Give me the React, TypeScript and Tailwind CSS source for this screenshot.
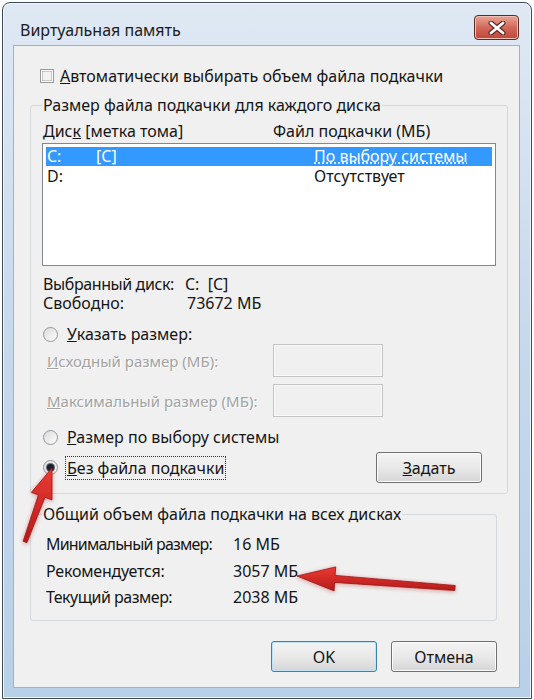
import React from "react";

const Radio = ({ checked }: { checked?: boolean }) => (
  <span className="flex h-[15px] w-[15px] shrink-0 items-center justify-center rounded-full border border-[#8e979f] bg-gradient-to-br from-[#dcdcdc] to-[#fdfdfd]">
    {checked && <span className="h-[7px] w-[7px] rounded-full bg-[#18222c] ring-1 ring-[#5c6670]" />}
  </span>
);

const Btn = ({ children, primary }: { children: React.ReactNode; primary?: boolean }) => (
  <button
    className={
      "flex h-[31px] w-[106px] items-center justify-center rounded-[3px] border bg-gradient-to-b from-[#f4f4f4] via-[#e9e9e9] to-[#d6d6d6] text-[16px] text-[#151515] " +
      (primary ? "border-[#3c7fb1] shadow-[inset_0_0_0_1px_#bfe3f6]" : "border-[#707070] shadow-[inset_0_0_0_1px_#fcfcfc]")
    }
  >
    {children}
  </button>
);

const Arrows = () => (
  <svg className="pointer-events-none absolute left-0 top-0" width="534" height="700" viewBox="0 0 534 700">
    <defs>
      <linearGradient id="red" x1="0" y1="0" x2="0" y2="1">
        <stop offset="0" stopColor="#ec3a35" />
        <stop offset="1" stopColor="#b51a1a" />
      </linearGradient>
      <filter id="sh" x="-20%" y="-20%" width="140%" height="140%">
        <feDropShadow dx="0" dy="1" stdDeviation="2" floodColor="#b02020" floodOpacity="0.45" />
      </filter>
    </defs>
    <polygon
      filter="url(#sh)"
      fill="url(#red)"
      stroke="#9c1414"
      strokeWidth="0.8"
      points="52,468 52,500 45,497.3 26.9,542.7 23.1,541.3 38.4,494.9 31.4,492.3"
    />
    <polygon
      filter="url(#sh)"
      fill="url(#red)"
      stroke="#9c1414"
      strokeWidth="0.8"
      points="297,576 335.7,566.9 335.1,575.4 455.2,585.5 454.8,590.5 334.7,582.4 334.1,590.9"
    />
  </svg>
);

export default function App() {
  return (
    <div className="relative h-[700px] w-[534px] bg-white font-['Noto_Sans',sans-serif] text-[16px] leading-[22px] text-[#151515]">
      <div className="ml-[2px] pt-[2px]">
        <div className="flex h-[697px] w-[530px] flex-col rounded-t-[8px] border border-[#3f4c58] bg-gradient-to-b from-[#dfe9f4] via-[#c6d8ec] to-[#b8d0e8] shadow-[inset_0_0_0_1px_#eef4fa]">
          {/* Title bar */}
          <div className="flex h-[42px] shrink-0 items-start">
            <span className="ml-[17px] mt-[16px] text-[16px] leading-[22px] text-[#1b1b1b]">Виртуальная память</span>
            <div className="ml-auto mr-[12px] mt-[12px] flex h-[25px] w-[45px] items-center justify-center rounded-[4px] border border-[#5e2a24] bg-gradient-to-b from-[#e7a597] via-[#d2685a] to-[#c0453a] shadow-[inset_0_0_0_1px_#f0c0b4]">
              <svg width="18" height="14" viewBox="0 0 18 14">
                <path d="M3 2 L15 12 M15 2 L3 12" stroke="#5a2a24" strokeWidth="5" strokeLinecap="round" />
                <path d="M3 2 L15 12 M15 2 L3 12" stroke="#ffffff" strokeWidth="2.8" strokeLinecap="round" />
              </svg>
            </div>
          </div>

          {/* Client area */}
          <div className="mb-[10px] ml-[10px] mr-[11px] flex flex-1 flex-col border border-[#9fb2c6] bg-[#f0f0f0]">
            <div className="ml-[26px] mt-[20px] flex h-[20px] items-center gap-[6px]">
              <span className="flex h-[14px] w-[14px] items-center justify-center border border-[#9a9a9a] bg-white">
                <span className="h-[10px] w-[10px] border border-[#c8c8c8] bg-[#f2f2f2]" />
              </span>
              <span>
                <u>А</u>втоматически выбирать объем файла подкачки
              </span>
            </div>

            <fieldset className="ml-[16px] mt-[8px] w-[478px] rounded-[3px] border border-[#d3d9de] px-[11px] pb-[10px]">
              <legend className="px-[1px]">Размер файла подкачки для каждого диска</legend>
              <div className="mt-[4px] grid h-[22px] grid-cols-[230px_1fr] items-center pl-[1px]">
                <span>
                  Дис<u>к</u> [метка тома]
                </span>
                <span>Файл подкачки (МБ)</span>
              </div>
              <div className="mt-[1px] h-[123px] w-[454px] border border-[#828790] bg-white p-[3px] leading-[19px]">
                <div className="grid h-[19px] grid-cols-[49px_218px_1fr] items-center bg-[#3399ff] pl-[1px] text-white">
                  <span>C:</span>
                  <span>[C]</span>
                  <span className="underline decoration-dotted">По выбору системы</span>
                </div>
                <div className="grid h-[21px] grid-cols-[49px_218px_1fr] items-center pl-[1px]">
                  <span>D:</span>
                  <span />
                  <span>Отсутствует</span>
                </div>
              </div>

              <div className="mt-[8px] grid h-[19px] grid-cols-[142px_1fr] items-center pl-[1px] leading-[18px]">
                <span className="tracking-[-0.4px]">Выбранный диск:</span>
                <span>C:&nbsp; [C]</span>
              </div>
              <div className="mt-[1px] grid h-[18px] grid-cols-[142px_1fr] items-center pl-[1px] leading-[18px]">
                <span>Свободно:</span>
                <span className="pl-[2px]">73672 МБ</span>
              </div>

              <div className="mt-[12px] flex h-[20px] items-center gap-[9px] pl-[1px] leading-[20px]">
                <Radio />
                <span>
                  <u>У</u>казать размер:
                </span>
              </div>
              <div className="grid h-[33px] grid-cols-[226px_110px] items-center pl-[5px]">
                <span className="text-[15px] text-[#a3a3a3] [text-shadow:1px_1px_0_#ffffff]">
                  <u>И</u>сходный размер (МБ):
                </span>
                <span className="h-[33px] border border-[#c4c4c4] bg-[#f0f0f0] shadow-[inset_0_0_0_1px_#fafafa]" />
              </div>
              <div className="mt-[7px] grid h-[33px] grid-cols-[226px_110px] items-center pl-[5px]">
                <span className="text-[15px] text-[#a3a3a3] [text-shadow:1px_1px_0_#ffffff]">
                  <u>М</u>аксимальный размер (МБ):
                </span>
                <span className="h-[33px] border border-[#c4c4c4] bg-[#f0f0f0] shadow-[inset_0_0_0_1px_#fafafa]" />
              </div>

              <div className="mt-[10px] flex h-[20px] items-center gap-[9px] pl-[1px] leading-[20px]">
                <Radio />
                <span>
                  <u>Р</u>азмер по выбору системы
                </span>
              </div>
              <div className="mt-[5px] flex h-[31px] items-center pl-[1px] pr-[14px]">
                <Radio checked />
                <span className="ml-[7px] border border-dotted border-[#333] px-[1px]">
                  <u>Б</u>ез файла подкачки
                </span>
                <span className="ml-auto">
                  <Btn>
                    <u>З</u>адать
                  </Btn>
                </span>
              </div>
            </fieldset>

            <fieldset className="ml-[16px] mt-[9px] w-[467px] rounded-[3px] border border-[#d3d9de] px-[11px] pb-[13px]">
              <legend className="px-[1px]">Общий объем файла подкачки на всех дисках</legend>
              <div className="mt-[9px] grid h-[20px] grid-cols-[187px_1fr] items-center pl-[4px] leading-[20px]">
                <span className="tracking-[-0.8px]">Минимальный размер:</span>
                <span>16 МБ</span>
              </div>
              <div className="mt-[7px] grid h-[20px] grid-cols-[187px_1fr] items-center pl-[4px] leading-[20px]">
                <span className="tracking-[-0.2px]">Рекомендуется:</span>
                <span>3057 МБ</span>
              </div>
              <div className="mt-[6px] grid h-[20px] grid-cols-[187px_1fr] items-center pl-[4px] leading-[20px]">
                <span className="tracking-[-0.5px]">Текущий размер:</span>
                <span>2038 МБ</span>
              </div>
            </fieldset>

            <div className="mt-[20px] flex justify-end gap-[14px] pr-[22px]">
              <Btn primary>OK</Btn>
              <Btn>Отмена</Btn>
            </div>
          </div>
        </div>
      </div>
      <Arrows />
    </div>
  );
}
